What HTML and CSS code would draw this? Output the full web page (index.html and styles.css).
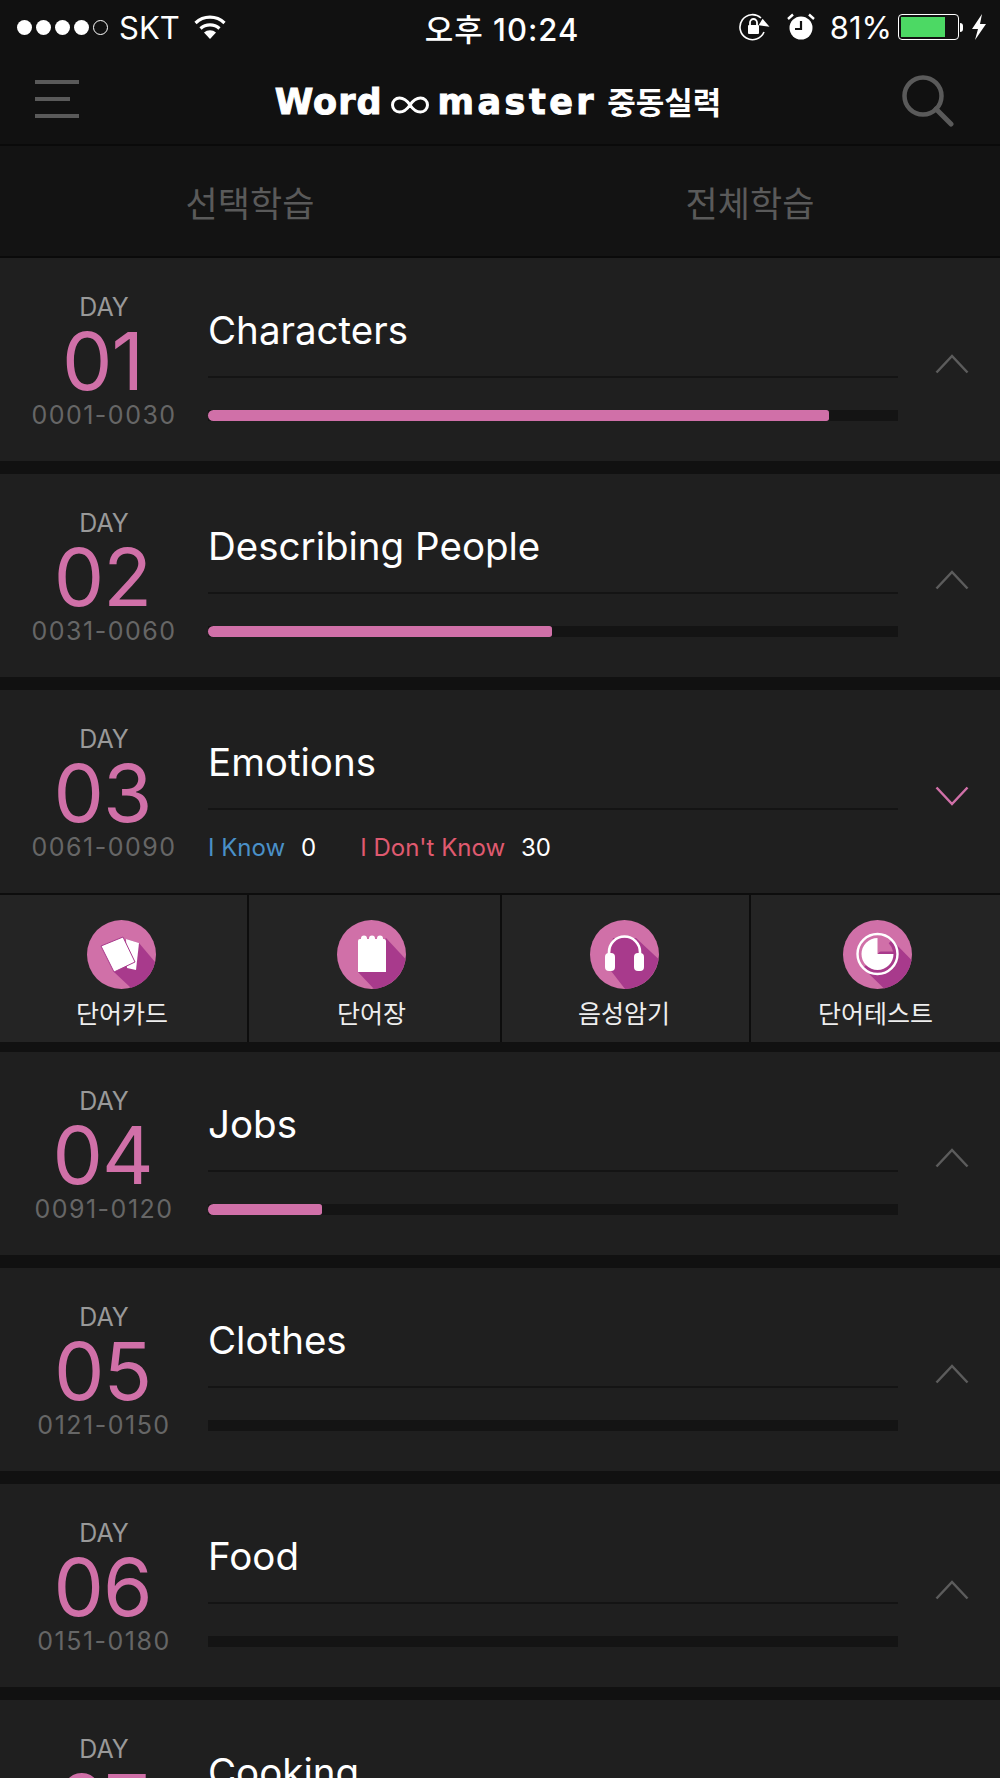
FILE: index.html
```html
<!DOCTYPE html>
<html lang="ko">

<head>
    <meta charset="UTF-8">
    <meta name="viewport" content="width=device-width, initial-scale=1.0">
    <title>Word master</title>
    <link rel="stylesheet" href="styles.css">
</head>

<body>
    <div class="top">
        <div class="status">
            <div class="status-left">
                <span class="signal"><i></i><i></i><i></i><i></i><i class="off"></i></span>
                <span>SKT</span>
                <svg class="wifi" width="34" height="26" viewBox="0 0 34 26">
                    <path d="M17 25 L11 18.5 A9 9 0 0 1 23 18.5 Z" fill="#fff"/>
                    <path d="M7.5 14.5 A14 14 0 0 1 26.5 14.5" fill="none" stroke="#fff" stroke-width="3.2"/>
                    <path d="M2.5 9 A21 21 0 0 1 31.5 9" fill="none" stroke="#fff" stroke-width="3.2"/>
                </svg>
            </div>
            <div class="status-time">오후 10:24</div>
            <div class="status-right">
                <svg class="lock" width="32" height="28" viewBox="0 0 32 28">
                    <path d="M22 5 A12.5 12.5 0 1 0 25 19" fill="none" stroke="#fff" stroke-width="1.6"/>
                    <path d="M23 6 L31 13 H20 Z" fill="#fff" transform="rotate(8 25 10)"/>
                    <rect x="9" y="12" width="11" height="9" rx="1" fill="#fff"/>
                    <path d="M11 12 V9.5 A3.5 3.5 0 0 1 18 9.5 V12" fill="none" stroke="#fff" stroke-width="1.8"/>
                </svg>
                <svg class="alarm" width="28" height="28" viewBox="0 0 28 28">
                    <circle cx="14" cy="15" r="11.5" fill="#fff"/>
                    <path d="M14 8 V16 H8" fill="none" stroke="#111" stroke-width="2.2"/>
                    <path d="M1 6 L6 1.5 M27 6 L22 1.5" stroke="#fff" stroke-width="2.4"/>
                </svg>
                <span class="battery-pct">81%</span>
                <span class="battery"><span class="battery-fill"></span></span>
                <span class="battery-tip"></span>
                <svg class="bolt" width="16" height="26" viewBox="0 0 16 26">
                    <path d="M11 0 L1 15 H7 L4 26 L15 10 H9 Z" fill="#fff"/>
                </svg>
            </div>
        </div>
        <div class="header">
            <div class="menu"><i></i><i class="short"></i><i></i></div>
            <div class="logo">
                <span class="logo-en">Word</span>
                <svg class="logo-inf" width="38" height="18" viewBox="0 0 38 18">
                    <path d="M19 9 C15 3 11 2 8.5 2 A7 7 0 0 0 8.5 16 C11 16 15 15 19 9 C23 3 27 2 29.5 2 A7 7 0 0 1 29.5 16 C27 16 23 15 19 9 Z" fill="none" stroke="#fff" stroke-width="3"/>
                </svg>
                <span class="logo-en logo-wide">master</span>
                <span class="logo-ko">중동실력</span>
            </div>
            <svg class="search" width="54" height="54" viewBox="0 0 54 54">
                <circle cx="23" cy="22" r="18.5" fill="none" stroke="#5a5a5a" stroke-width="4.5"/>
                <path d="M36 35 L51 50" stroke="#5a5a5a" stroke-width="5" stroke-linecap="round"/>
            </svg>
        </div>
    </div>

    <div class="tabs">
        <div class="tab">선택학습</div>
        <div class="tab">전체학습</div>
    </div>

    <div class="day-row">
        <div class="day-col">
            <div class="day-label">DAY</div>
            <div class="day-num">01</div>
            <div class="day-range">0001-0030</div>
        </div>
        <div class="day-main">
            <div class="day-title">Characters</div>
            <div class="day-info">
                <div class="bar"><div class="bar-fill" style="width: 90%"></div></div>
            </div>
        </div>
        <svg class="chev" width="34" height="20" viewBox="0 0 34 20"><path d="M1.5 18.5 L17 2 L32.5 18.5" /></svg>
    </div>

    <div class="day-row">
        <div class="day-col">
            <div class="day-label">DAY</div>
            <div class="day-num">02</div>
            <div class="day-range">0031-0060</div>
        </div>
        <div class="day-main">
            <div class="day-title">Describing People</div>
            <div class="day-info">
                <div class="bar"><div class="bar-fill" style="width: 49.8%"></div></div>
            </div>
        </div>
        <svg class="chev" width="34" height="20" viewBox="0 0 34 20"><path d="M1.5 18.5 L17 2 L32.5 18.5" /></svg>
    </div>

    <div class="day-row open">
        <div class="day-col">
            <div class="day-label">DAY</div>
            <div class="day-num">03</div>
            <div class="day-range">0061-0090</div>
        </div>
        <div class="day-main">
            <div class="day-title">Emotions</div>
            <div class="day-info counts">
                <span class="know">I Know</span><span class="count">0</span>
                <span class="dont">I Don't Know</span><span class="count">30</span>
            </div>
        </div>
        <svg class="chev pink" width="34" height="20" viewBox="0 0 34 20"><path d="M1.5 1.5 L17 18 L32.5 1.5" /></svg>
    </div>

    <div class="actions">
        <div class="action">
            <svg class="action-icon" width="69" height="69" viewBox="0 0 69 69">
                <circle cx="34.5" cy="34.5" r="34.5" fill="#d070a8"/>
                <path d="M27 52 L44 68 A34.5 34.5 0 0 0 68 42 L52 23 L39 19 Z" fill="#a83a8c"/>
                <path d="M39 19 L52 23 L49 50 L40 48 Z" fill="#fff"/>
                <path d="M14 26 L36 17 L48 42 L27 52 Z" fill="#fff" stroke="#a83a8c" stroke-width="1"/>
            </svg>
            <div class="action-label">단어카드</div>
        </div>
        <div class="action">
            <svg class="action-icon" width="69" height="69" viewBox="0 0 69 69">
                <circle cx="34.5" cy="34.5" r="34.5" fill="#d070a8"/>
                <path d="M21 52 L37 69 A34.5 34.5 0 0 0 68.5 39 L49 18 Z" fill="#a83a8c"/>
                <path d="M21 21 Q21 19 23 19 H24 V18.5 A3 3 0 0 1 30 18.5 V19 H32 V18.5 A3 3 0 0 1 38 18.5 V19 H40 V18.5 A3 3 0 0 1 46 18.5 V19 H47 Q49 19 49 21 V52 H21 Z" fill="#fff"/>
            </svg>
            <div class="action-label">단어장</div>
        </div>
        <div class="action">
            <svg class="action-icon" width="69" height="69" viewBox="0 0 69 69">
                <circle cx="34.5" cy="34.5" r="34.5" fill="#d070a8"/>
                <path d="M18 47 L35 69 A34.5 34.5 0 0 0 68.5 39 L46 18 L23 18 Z" fill="#a83a8c"/>
                <path d="M19 35 V32 A15.5 15.5 0 0 1 50 32 V35" fill="none" stroke="#fff" stroke-width="2.6"/>
                <rect x="15" y="33" width="10" height="18" rx="4" fill="#fff"/>
                <rect x="44" y="33" width="10" height="18" rx="4" fill="#fff"/>
            </svg>
            <div class="action-label">음성암기</div>
        </div>
        <div class="action">
            <svg class="action-icon" width="69" height="69" viewBox="0 0 69 69">
                <circle cx="34.5" cy="34.5" r="34.5" fill="#d070a8"/>
                <path d="M20 48 L41 68.5 A34.5 34.5 0 0 0 68.5 40 L49 20 Z" fill="#a83a8c"/>
                <circle cx="34.5" cy="34" r="20" fill="none" stroke="#fff" stroke-width="2.4"/>
                <path d="M34.5 34 V18 A16 16 0 1 0 50.5 34 Z" fill="#fff"/>
                <path d="M37 31.5 V18.5 A16 16 0 0 1 50 31.5 Z" fill="#d070a8"/>
            </svg>
            <div class="action-label">단어테스트</div>
        </div>
    </div>

    <div class="day-row">
        <div class="day-col">
            <div class="day-label">DAY</div>
            <div class="day-num">04</div>
            <div class="day-range">0091-0120</div>
        </div>
        <div class="day-main">
            <div class="day-title">Jobs</div>
            <div class="day-info">
                <div class="bar"><div class="bar-fill" style="width: 16.5%"></div></div>
            </div>
        </div>
        <svg class="chev" width="34" height="20" viewBox="0 0 34 20"><path d="M1.5 18.5 L17 2 L32.5 18.5" /></svg>
    </div>

    <div class="day-row">
        <div class="day-col">
            <div class="day-label">DAY</div>
            <div class="day-num">05</div>
            <div class="day-range">0121-0150</div>
        </div>
        <div class="day-main">
            <div class="day-title">Clothes</div>
            <div class="day-info">
                <div class="bar"></div>
            </div>
        </div>
        <svg class="chev" width="34" height="20" viewBox="0 0 34 20"><path d="M1.5 18.5 L17 2 L32.5 18.5" /></svg>
    </div>

    <div class="day-row">
        <div class="day-col">
            <div class="day-label">DAY</div>
            <div class="day-num">06</div>
            <div class="day-range">0151-0180</div>
        </div>
        <div class="day-main">
            <div class="day-title">Food</div>
            <div class="day-info">
                <div class="bar"></div>
            </div>
        </div>
        <svg class="chev" width="34" height="20" viewBox="0 0 34 20"><path d="M1.5 18.5 L17 2 L32.5 18.5" /></svg>
    </div>

    <div class="day-row">
        <div class="day-col">
            <div class="day-label">DAY</div>
            <div class="day-num">07</div>
            <div class="day-range">0181-0210</div>
        </div>
        <div class="day-main">
            <div class="day-title">Cooking</div>
            <div class="day-info">
                <div class="bar"></div>
            </div>
        </div>
        <svg class="chev" width="34" height="20" viewBox="0 0 34 20"><path d="M1.5 18.5 L17 2 L32.5 18.5" /></svg>
    </div>
</body>

</html>
```

FILE: styles.css
```css
/* Page */
html,
body {
    height: 1778px;
    overflow: hidden;
}

body {
    margin: 0;
    background-color: #111;
    color: #fff;
    font-family: Inter, "Noto Sans CJK KR", sans-serif;
}

/* Status bar */
.top {
    height: 144px;
    background-color: #111;
}

.status {
    display: grid;
    grid-template-columns: 1fr auto 1fr;
    align-items: center;
    height: 54px;
    padding: 0 13px 0 17px;
    font-size: 31px;
}

.status-left {
    display: flex;
    align-items: center;
}

.signal {
    display: flex;
    gap: 4px;
    margin-right: 11px;
}

.signal i {
    width: 15px;
    height: 15px;
    border-radius: 50%;
    background-color: #fff;
}

.signal i.off {
    box-sizing: border-box;
    background: none;
    border: 1px solid #fff;
}

.wifi {
    margin-left: 13px;
}

.status-time {
    font-weight: 500;
    letter-spacing: 1px;
}

.status-right {
    display: flex;
    align-items: center;
    justify-content: flex-end;
}

.alarm {
    margin-left: 16px;
}

.battery-pct {
    margin-left: 15px;
}

.battery {
    box-sizing: border-box;
    width: 61px;
    height: 26px;
    margin-left: 6px;
    padding: 2px;
    border: 1px solid #fff;
    border-radius: 4px;
}

.battery-fill {
    display: block;
    width: 80%;
    height: 100%;
    background-color: #4cd964;
}

.battery-tip {
    width: 3px;
    height: 9px;
    margin-left: 1px;
    background-color: #fff;
    border-radius: 0 3px 3px 0;
}

.bolt {
    margin-left: 8px;
}

/* Header */
.header {
    display: flex;
    align-items: center;
    justify-content: space-between;
    height: 90px;
    padding: 0 46px 0 35px;
}

.menu {
    display: flex;
    flex-direction: column;
    gap: 13px;
    width: 44px;
}

.menu i {
    display: block;
    height: 4px;
    background-color: #5a5a5a;
}

.menu i.short {
    width: 35px;
}

.logo {
    display: flex;
    align-items: baseline;
    margin: 3px 0 0 17px;
    white-space: nowrap;
}

.logo-en {
    font-family: "DejaVu Sans", sans-serif;
    font-size: 35px;
    font-weight: 700;
    letter-spacing: 1px;
    -webkit-text-stroke: 1px #fff;
}

.logo-wide {
    letter-spacing: 3.5px;
}

.logo-inf {
    margin: 0 8px 0 9px;
}

.logo-ko {
    margin-left: 10px;
    font-size: 31px;
    font-weight: 700;
}

.search {
    margin-top: 4px;
}

/* Tabs */
.tabs {
    display: flex;
    height: 110px;
    background-color: #131313;
    border-top: 2px solid #0a0a0a;
    border-bottom: 2px solid #0a0a0a;
}

.tab {
    flex: 1;
    display: flex;
    align-items: center;
    justify-content: center;
    color: #5a5a5a;
    font-size: 35px;
}

/* Day rows */
.day-row {
    display: flex;
    box-sizing: border-box;
    height: 203px;
    margin-bottom: 13px;
    background-color: #1f1f1f;
}

.day-row.open {
    margin-bottom: 0;
}

.day-col {
    width: 208px;
    padding-top: 34px;
    text-align: center;
}

.day-label {
    color: #999;
    font-size: 25px;
    line-height: 30px;
}

.day-num {
    margin-top: 3px;
    padding-right: 3px;
    color: #d070a8;
    font-size: 80px;
    font-weight: 370;
    line-height: 72px;
    letter-spacing: -1px;
}

.day-range {
    margin-top: 2px;
    color: #666;
    font-size: 25px;
    line-height: 32px;
    letter-spacing: 1.5px;
}

.day-main {
    width: 690px;
}

.day-title {
    box-sizing: border-box;
    height: 120px;
    padding-top: 49px;
    border-bottom: 2px solid #141414;
    font-size: 38.5px;
    line-height: 46px;
}

.day-info {
    padding-top: 32px;
}

.bar {
    height: 11px;
    background-color: #141414;
}

.bar-fill {
    height: 100%;
    background-color: #d070a8;
    border-radius: 6px 3px 3px 6px;
}

.counts {
    display: flex;
    padding-top: 23px;
    font-size: 24px;
    line-height: 30px;
}

.know {
    color: #4a90c8;
}

.dont {
    margin-left: 44px;
    color: #e05a70;
}

.count {
    margin-left: 16px;
}

.chev {
    margin: 96px 0 0 37px;
    fill: none;
    stroke: #5c5c5c;
    stroke-width: 2.5;
}

.chev.pink {
    stroke: #d070a8;
}

/* Action row under the open day */
.actions {
    display: grid;
    grid-template-columns: 247px 251px 247px 249px;
    gap: 2px;
    height: 149px;
    margin-bottom: 10px;
    border-top: 2px solid #0d0d0d;
    box-sizing: border-box;
    background-color: #0d0d0d;
}

.action {
    display: flex;
    flex-direction: column;
    align-items: center;
    padding-top: 25px;
    background-color: #242424;
}

.action:nth-child(1) {
    padding-right: 3px;
}

.action:nth-child(2) {
    padding-right: 6px;
}

.action:nth-child(3) {
    padding-right: 3px;
}

.action:nth-child(1) .action-icon {
    margin-right: 2px;
}

.action:nth-child(4) .action-icon {
    margin-left: 4px;
}

.action-label {
    margin-top: 8px;
    color: #eee;
    font-size: 25px;
    line-height: 34px;
}
```
